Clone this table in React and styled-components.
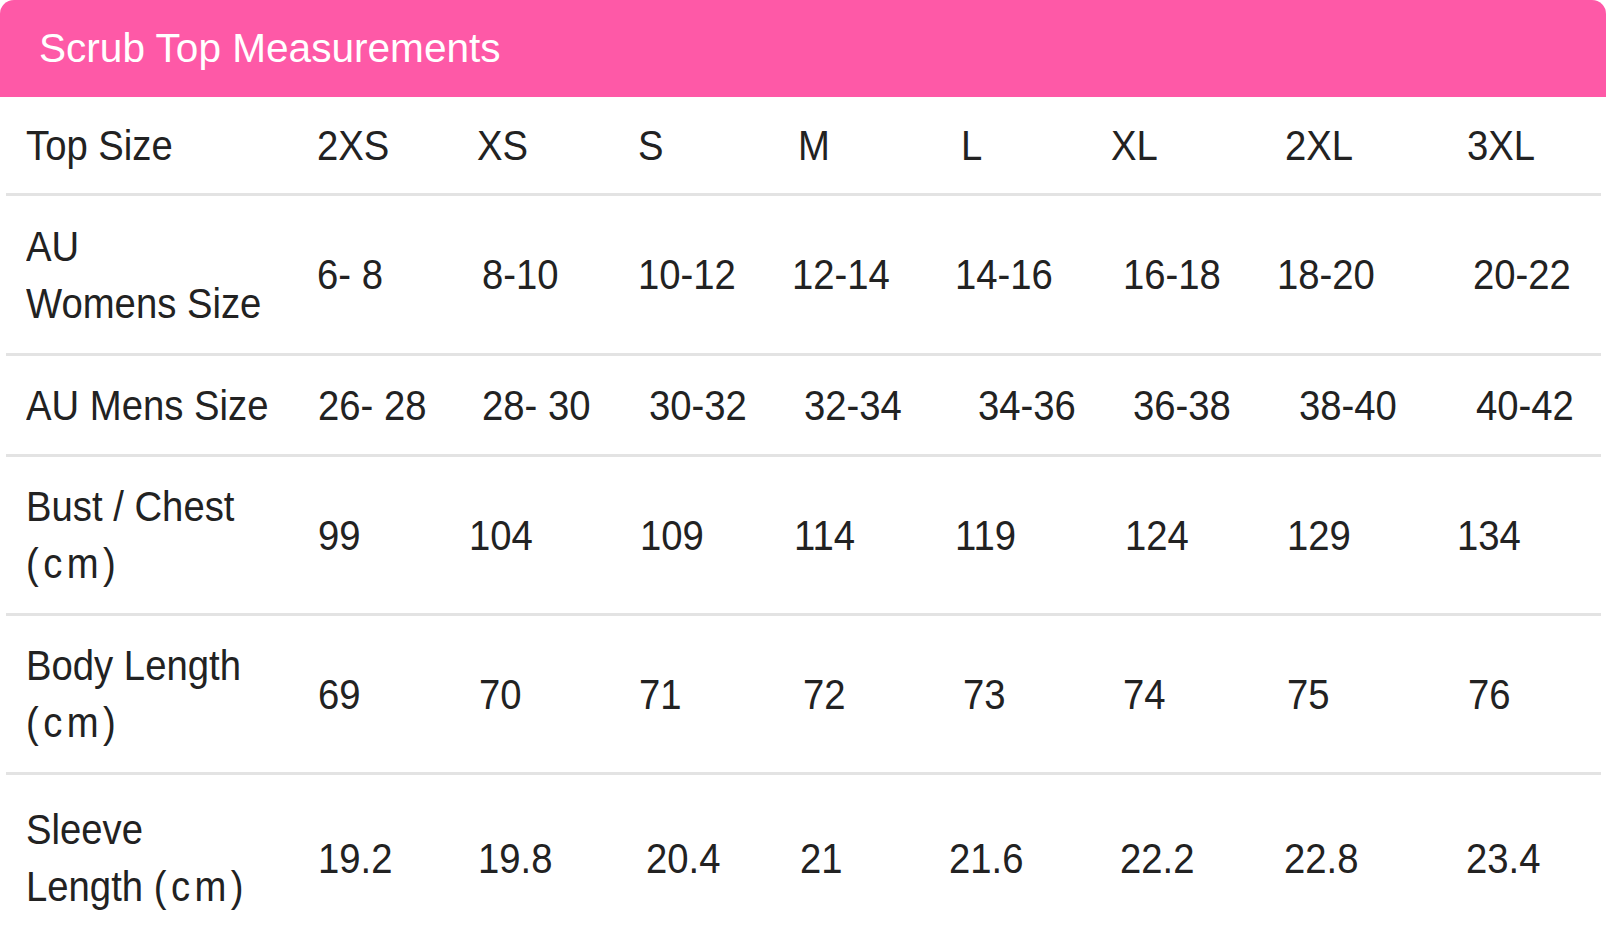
import React from 'react';
import styled, { createGlobalStyle } from 'styled-components';

const GlobalStyle = createGlobalStyle`
  html, body {
    margin: 0;
    padding: 0;
    background: #ffffff;
  }
  body {
    font-family: "Liberation Sans", Arial, sans-serif;
  }
`;

const Page = styled.div`
  width: 1606px;
  height: 939px;
  overflow: hidden;
  background: #ffffff;
`;

const TitleBar = styled.div`
  height: 97px;
  display: flex;
  align-items: center;
  padding-left: 39px;
  background: #fe59a7;
  border-radius: 14px 14px 0 0;
`;

const Title = styled.h1`
  margin: 0;
  font-family: "Liberation Sans", Arial, sans-serif;
  font-weight: 400;
  font-size: 40.6px;
  color: #ffffff;
`;

const Table = styled.div`
  display: flex;
  flex-direction: column;
  padding: 0 5px 0 6px;
`;

const Row = styled.div`
  box-sizing: border-box;
  height: ${ ( { h } ) => h }px;
  display: grid;
  grid-template-columns: 291px 152px 169px 154px 157px 162px 166px 180px 1fr;
  align-items: center;
  padding-left: 20px;
  border-bottom: ${ ( { last } ) => ( last ? 'none' : '3px solid #e3e3e3' ) };
`;

const Cell = styled.div`
  padding-left: ${ ( { indent } ) => indent || 0 }px;
  white-space: nowrap;
`;

// the chart's type is a narrow sans: Arial squeezed sideways
const Text = styled.span`
  display: inline-block;
  font-family: "Liberation Sans", Arial, sans-serif;
  font-size: 43px;
  line-height: 57px;
  color: #222222;
  transform: scaleX(0.89);
  transform-origin: left center;
`;

const Unit = styled.span`
  letter-spacing: 5px;
`;

const cm = <Unit>(cm)</Unit>;

const rows = [
  {
    h: 99,
    label: 'Top Size',
    cells: [ [ '2XS', 0 ], [ 'XS', 8 ], [ 'S', 0 ], [ 'M', 6 ], [ 'L', 12 ], [ 'XL', 0 ], [ '2XL', 8 ], [ '3XL', 10 ] ],
  },
  {
    h: 160,
    label: <>AU<br />Womens Size</>,
    cells: [ [ '6- 8', 0 ], [ '8-10', 13 ], [ '10-12', 0 ], [ '12-14', 0 ], [ '14-16', 6 ], [ '16-18', 12 ], [ '18-20', 0 ], [ '20-22', 16 ] ],
  },
  {
    h: 101,
    label: 'AU Mens Size',
    cells: [ [ '26- 28', 1 ], [ '28- 30', 13 ], [ '30-32', 11 ], [ '32-34', 12 ], [ '34-36', 29 ], [ '36-38', 22 ], [ '38-40', 22 ], [ '40-42', 19 ] ],
  },
  {
    h: 159,
    label: <>Bust / Chest<br />{ cm }</>,
    cells: [ [ '99', 1 ], [ '104', 0 ], [ '109', 2 ], [ '114', 2 ], [ '119', 6 ], [ '124', 14 ], [ '129', 10 ], [ '134', 0 ] ],
  },
  {
    h: 159,
    label: <>Body Length<br />{ cm }</>,
    cells: [ [ '69', 1 ], [ '70', 10 ], [ '71', 1 ], [ '72', 11 ], [ '73', 14 ], [ '74', 12 ], [ '75', 10 ], [ '76', 11 ] ],
  },
  {
    h: 166,
    label: <>Sleeve<br />Length { cm }</>,
    cells: [ [ '19.2', 1 ], [ '19.8', 9 ], [ '20.4', 8 ], [ '21', 8 ], [ '21.6', 0 ], [ '22.2', 9 ], [ '22.8', 7 ], [ '23.4', 9 ] ],
  },
];

export default function App () {
  return (
    <Page>
      <GlobalStyle />
      <TitleBar>
        <Title>Scrub Top Measurements</Title>
      </TitleBar>
      <Table>
        { rows.map( ( row, i ) => (
          <Row key={ i } h={ row.h } last={ i === rows.length - 1 }>
            <Cell><Text>{ row.label }</Text></Cell>
            { row.cells.map( ( [ text, indent ], j ) => (
              <Cell key={ j } indent={ indent }><Text>{ text }</Text></Cell>
            ) ) }
          </Row>
        ) ) }
      </Table>
    </Page>
  );
}
